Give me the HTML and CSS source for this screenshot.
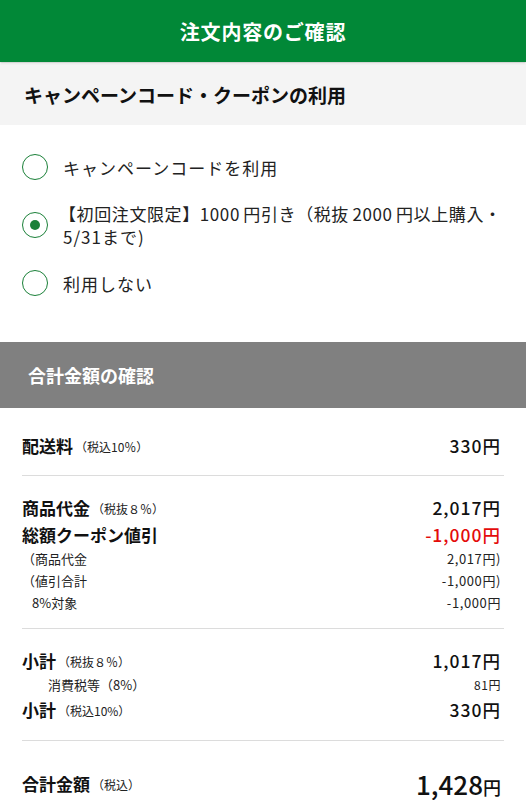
FILE: index.html
```html
<!DOCTYPE html>
<html lang="ja">
<head>
<meta charset="utf-8">
<link rel="stylesheet" href="styles.css">
</head>
<body>
<header class="appbar">注文内容のご確認</header>

<div class="sec-title">キャンペーンコード・クーポンの利用</div>

<div class="options">
  <div class="opt"><span class="radio"></span><span class="opt-text">キャンペーンコードを利用</span></div>
  <div class="opt"><span class="radio on"></span><span class="opt-text"><span class="nw">【初回注文限定】1000&#8198;円引き（税抜&#8198;2000&#8198;円以上購入・</span><br><span class="l2">5/31まで)</span></span></div>
  <div class="opt"><span class="radio"></span><span class="opt-text">利用しない</span></div>
</div>

<div class="gray-bar">合計金額の確認</div>

<div class="summary">
  <div class="group g1">
    <div class="row big"><span class="lbl">配送料<small>（税込10％）</small></span><span class="val">330円</span></div>
  </div>
  <div class="group g2">
    <div class="row big"><span class="lbl">商品代金<small>（税抜８％）</small></span><span class="val">2,017円</span></div>
    <div class="row big"><span class="lbl">総額クーポン値引</span><span class="val red">-1,000円</span></div>
    <div class="row sm"><span class="lbl">（商品代金</span><span class="val">2,017円)</span></div>
    <div class="row sm"><span class="lbl">（値引合計</span><span class="val">-1,000円)</span></div>
    <div class="row sm"><span class="lbl ind1">8%対象</span><span class="val">-1,000円</span></div>
  </div>
  <div class="group g3">
    <div class="row big"><span class="lbl">小計<small>（税抜８％）</small></span><span class="val">1,017円</span></div>
    <div class="row sm"><span class="lbl ind2">消費税等（8%）</span><span class="val tiny">81円</span></div>
    <div class="row big"><span class="lbl">小計<small>（税込10%）</small></span><span class="val">330円</span></div>
  </div>
  <div class="group g4">
    <div class="row total"><span class="lbl">合計金額<small>（税込）</small></span><span class="val"><span class="num">1,428</span><span class="yen">円</span></span></div>
  </div>
</div>
</body>
</html>
```

FILE: styles.css
```css
* { box-sizing: border-box; }
html, body { margin: 0; padding: 0; }
body {
  width: 526px;
  background: #fff;
  color: #111;
  font-family: "Noto Sans CJK JP", "Noto Sans", sans-serif;
}
.appbar {
  height: 62px;
  background: #018837;
  color: #fff;
  font-size: 20px;
  font-weight: 700;
  display: flex;
  align-items: center;
  justify-content: center;
  letter-spacing: 0.8px;
  box-shadow: 0 1px 2px rgba(0,0,0,0.25);
  position: relative;
}
.sec-title {
  margin-top: 2px;
  height: 61px;
  background: #f4f4f4;
  display: flex;
  align-items: center;
  padding-left: 24px;
  font-size: 19px;
  font-weight: 700;
  color: #111;
}
.options {
  padding: 29px 22px 46px 22px;
  display: flex;
  flex-direction: column;
  gap: 22px;
}
.opt {
  display: flex;
  align-items: center;
  gap: 15px;
}
.opt:nth-child(2) { gap: 11px; }
.radio {
  flex: 0 0 26px;
  width: 26px;
  height: 26px;
  border: 1.5px solid #1a8038;
  border-radius: 50%;
  display: flex;
  align-items: center;
  justify-content: center;
}
.radio.on::after {
  content: "";
  width: 10px;
  height: 10px;
  border-radius: 50%;
  background: #1a8038;
}
.opt-text {
  font-size: 17px;
  line-height: 23px;
  letter-spacing: 1px;
  color: #222;
}
.nw { white-space: nowrap; letter-spacing: 0.6px; }
.l2 { padding-left: 4px; }
.gray-bar {
  height: 66px;
  background: #808080;
  color: #fff;
  font-size: 18px;
  font-weight: 700;
  display: flex;
  align-items: center;
  padding-left: 28px;
}
.summary { padding: 0 22px; }
.group { border-bottom: 1px solid #dcdcdc; }
.group:last-child { border-bottom: none; }
.g1 { padding: 24px 0 16px; }
.g2 { padding: 18px 0 14px; }
.g3 { padding: 18px 0 17px; }
.g4 { padding: 27px 0 0; }
.row {
  display: flex;
  justify-content: space-between;
  align-items: center;
}
.row > span { display: block; }
.row .val { padding-right: 3px; }
.row.big { height: 27px; line-height: 27px; font-size: 17px; }
.row.big .lbl { font-weight: 700; }
.row.big .val { font-weight: 500; font-size: 17.5px; letter-spacing: 1px; }
.lbl small {
  font-size: 12px;
  font-weight: 400;
  color: #222;
  margin-left: 2px;
  line-height: 1;
  vertical-align: 1px;
}
.row.sm { height: 22px; line-height: 22px; font-size: 13px; color: #222; }
.row.sm .val { letter-spacing: 0.6px; }
.ind1 { padding-left: 10px; }
.ind2 { padding-left: 26px; }
.val.tiny { font-size: 12px; }
.red { color: #e40b0b; }
.row.total { height: 32px; line-height: 32px; }
.row.total .lbl { font-size: 17px; font-weight: 700; }
.row.total .val { line-height: 1; }
.row.total .num { font-size: 26px; font-weight: 500; }
.row.total .yen { font-size: 18px; font-weight: 500; }
```
